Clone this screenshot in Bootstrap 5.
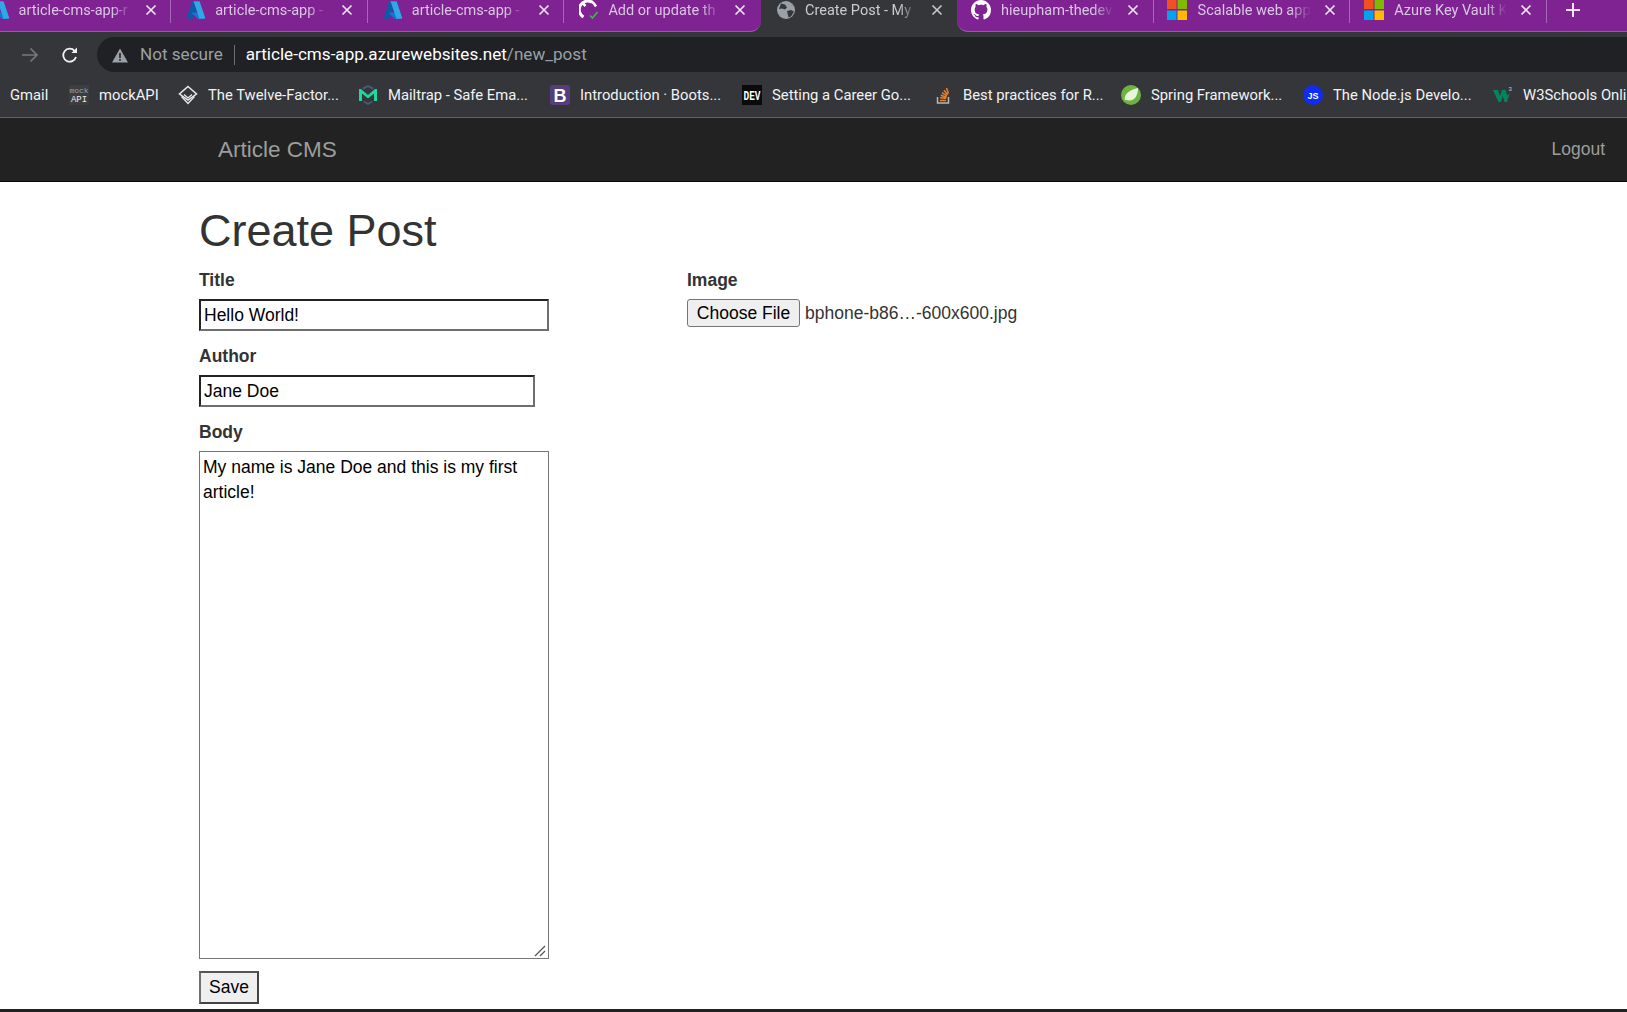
<!DOCTYPE html>
<html lang="en">
<head>
<meta charset="utf-8">
<title>Create Post - My Blog</title>
<link href="https://cdn.jsdelivr.net/npm/bootstrap@5.3.0/dist/css/bootstrap.min.css" rel="stylesheet">
<style>
html,body{height:100%;overflow:hidden}
body{font-family:"Liberation Sans",Arial,sans-serif;font-size:17.5px;color:#333;background:#fff}
.shell{height:100vh}
.tabstrip{height:37px;background:#35363a;font-family:Roboto,sans-serif;font-size:14.5px;flex:none}
.tabgroup{height:32px;background:#7e2391;border-bottom:1px solid #9c57ab;overflow:hidden;flex:none}
.tabgroup-a{width:761px;border-bottom-right-radius:11px}
.tabgroup-b{flex:1 1 auto;border-bottom-left-radius:11px}
.chrome-tab{width:196.6px;height:31px;flex:none;position:relative;padding-left:15px;color:#dac6e2}
.tabgroup-b .chrome-tab{padding-left:13.5px}
.tabgroup-b .tab-txt{margin-left:10.5px}
.tab-first{margin-left:-25.4px}
.tab-sep::after{content:"";position:absolute;right:0;top:0;height:23px;width:1px;background:#a668b4}
.tab-active{width:196px;height:37px;flex:none;position:relative;padding-left:15px;color:#c9cbce}
.tab-row{height:20px}
.tab-ico{width:20px;height:20px;flex:none;display:block}
.tab-txt{width:113px;margin-left:9px;padding-top:1px;white-space:nowrap;overflow:hidden;line-height:20px;-webkit-mask-image:linear-gradient(90deg,#000 82%,transparent 100%);mask-image:linear-gradient(90deg,#000 82%,transparent 100%)}
.tab-x{width:12px;height:12px;margin-left:13px;flex:none;display:block}
.tab-plus{width:16px;height:16px;margin:2px 0 0 18px;flex:none;display:block}
.toolbar{height:35px;background:#35363a;flex:none;padding-left:21px}
.tool-ico{width:18px;height:18px;display:block;flex:none}
.tool-reload{margin-left:22px}
.omnibox{margin-left:18px;flex:1 1 auto;height:35px;background:#202124;border-radius:17.5px 0 0 17.5px;padding-left:15px;padding-top:1px;font-family:Roboto,sans-serif;font-size:17.1px;color:#9aa0a6;white-space:nowrap}
.warn-ico{width:16px;height:15px;flex:none;display:block}
.not-secure{margin-left:12px}
.omni-sep{width:1px;height:20px;background:#6c6e72;margin:0 11px;flex:none}
.url-host{color:#fff}
.bookmarks{height:46px;background:#35363a;border-bottom:1px solid #5f6064;flex:none;padding:2px 0 0 10px;display:grid;grid-template-columns:59px 109px 180px 192px 192px 191px 188px 182px 190px 200px;align-items:center;font-family:Roboto,sans-serif;font-size:14.8px;color:#f1f3f4;overflow:hidden;white-space:nowrap}
.bm-ico{width:20px;height:20px;flex:none;display:block;margin-right:10px;margin-top:-2px}
.site-nav{height:64px;background:#222;border-bottom:1px solid #080808;flex:none;padding:0 22px 0 218px;--bs-navbar-padding-y:0}
.site-brand{font-size:22.5px;color:#9d9d9d;text-decoration:none}
.site-link{font-size:17.5px;color:#9d9d9d;text-decoration:none}
.page-main{flex:1 1 auto;padding-left:199px;min-height:0}
.page-title{font-family:"Liberation Sans",Arial,sans-serif;font-size:45px;font-weight:400;line-height:50px;color:#333;margin:24px 0 11px}
.col-left{width:488px;flex:none}
.field-label{display:block;font-weight:700;font-size:17.5px;line-height:25px;margin:0 0 6px;padding-top:1px;color:#333}
.raw-input{display:block;height:32px;padding:0 3px;font-size:17.5px;color:#000;background:#fff;font-family:"Liberation Sans",Arial,sans-serif;border-style:solid;border-width:2px;border-color:#222 #6f6f6f #6f6f6f #222;border-radius:0;outline:0;margin-bottom:12px}
.input-title{width:350px}
.input-author{width:336px}
.area-wrap{width:350px;margin-bottom:12px}
.raw-area{display:block;width:350px;height:508px;padding:3px 3px 2px;font-size:17.5px;line-height:25px;color:#000;font-family:"Liberation Sans",Arial,sans-serif;border:1px solid #767676;border-radius:0;outline:0;resize:none}
.grip{position:absolute;right:3px;bottom:2px;width:12px;height:12px;display:block;pointer-events:none}
.save-btn{display:block;width:60px;height:33px;padding:0 0 1px;background:#efefef;color:#000;font-size:17.5px;font-family:"Liberation Sans",Arial,sans-serif;border-style:solid;border-width:2px;border-color:#555 #444 #444 #6f6f6f}
.choose-btn{width:113px;height:28px;padding:0;background:#efefef;color:#000;font-size:17.5px;font-family:"Liberation Sans",Arial,sans-serif;border:1px solid #767676;border-radius:3px;flex:none}
.file-name{margin-left:5px;color:#333}
.page-foot{height:3px;background:#222;flex:none}
</style>
</head>
<body>
<svg width="0" height="0" class="position-absolute">
<defs>
<symbol id="i-azure" viewBox="0 0 96 96"><path fill="#0d5aa8" d="M33.34 6.54h26.04l-27.03 80.1a4.15 4.15 0 0 1-3.94 2.81H8.15a4.14 4.14 0 0 1-3.93-5.47L29.4 9.38a4.15 4.15 0 0 1 3.94-2.83z"/><path fill="#0f78d4" d="M71.17 60.26H29.88a1.91 1.91 0 0 0-1.3 3.31l26.53 24.76a4.17 4.17 0 0 0 2.85 1.12h23.38z"/><path fill="#2fa8e8" d="M66.6 9.36a4.14 4.14 0 0 0-3.93-2.82H33.65a4.15 4.15 0 0 1 3.93 2.82l25.18 74.62a4.15 4.15 0 0 1-3.93 5.48h29.02a4.15 4.15 0 0 0 3.93-5.48z"/></symbol>
<symbol id="i-x" viewBox="0 0 12 12"><path d="M1.500 1.500l9 9M10.500 1.500l-9 9" stroke="#f0e6f3" stroke-width="1.700" fill="none"/></symbol>
<symbol id="i-xa" viewBox="0 0 12 12"><path d="M1.500 1.500l9 9M10.500 1.500l-9 9" stroke="#c4c7c5" stroke-width="1.700" fill="none"/></symbol>
<symbol id="i-ms" viewBox="0 0 20 20"><rect x="0" y="-1" width="9.500" height="10" fill="#f25022"/><rect x="10.500" y="-1" width="9.500" height="10" fill="#7fba00"/><rect x="0" y="10.500" width="9.500" height="9.500" fill="#00a4ef"/><rect x="10.500" y="10.500" width="9.500" height="9.500" fill="#ffb900"/></symbol>
</defs>
</svg>
<div class="shell d-flex flex-column">
  <div class="tabstrip d-flex">
    <div class="tabgroup tabgroup-a d-flex">
      <div class="chrome-tab tab-first tab-sep"><div class="tab-row d-flex align-items-center"><svg class="tab-ico"><use href="#i-azure"/></svg><span class="tab-txt">article-cms-app-r</span><svg class="tab-x"><use href="#i-x"/></svg></div></div>
      <div class="chrome-tab tab-sep"><div class="tab-row d-flex align-items-center"><svg class="tab-ico"><use href="#i-azure"/></svg><span class="tab-txt">article-cms-app -</span><svg class="tab-x"><use href="#i-x"/></svg></div></div>
      <div class="chrome-tab tab-sep"><div class="tab-row d-flex align-items-center"><svg class="tab-ico"><use href="#i-azure"/></svg><span class="tab-txt">article-cms-app -</span><svg class="tab-x"><use href="#i-x"/></svg></div></div>
      <div class="chrome-tab"><div class="tab-row d-flex align-items-center"><svg class="tab-ico" viewBox="0 0 20 20"><path d="M13 2.200A8 8 0 1 0 4.500 17" fill="none" stroke="#fff" stroke-width="3"/><path d="M3.500 3l3 3M12 1l3 2.500 2 3" fill="none" stroke="#fff" stroke-width="2.500"/><path d="M11 15.500l2.500 2.500 5-6" fill="none" stroke="#3fb950" stroke-width="1.600"/></svg><span class="tab-txt">Add or update th</span><svg class="tab-x"><use href="#i-x"/></svg></div></div>
    </div>
    <div class="tab-active"><div class="tab-row d-flex align-items-center"><svg class="tab-ico" viewBox="0 0 20 20"><circle cx="10" cy="10" r="9" fill="#9aa0a6"/><path d="M5 3.500l4 1 2 3-2 2-3-1-3 .5zM11 11l4-1 3 1.500-3 5-2.500 1z" fill="#35363a"/></svg><span class="tab-txt">Create Post - My</span><svg class="tab-x"><use href="#i-xa"/></svg></div></div>
    <div class="tabgroup tabgroup-b d-flex">
      <div class="chrome-tab tab-sep"><div class="tab-row d-flex align-items-center"><svg class="tab-ico" viewBox="0 0 16 16"><path fill="#fff" d="M8 0C3.580 0 0 3.580 0 8c0 3.540 2.290 6.530 5.470 7.590.4.07.55-.17.55-.38 0-.19-.01-.82-.01-1.490-2.010.37-2.530-.49-2.690-.94-.09-.23-.48-.94-.82-1.130-.28-.15-.68-.52-.01-.53.63-.01 1.080.58 1.230.82.72 1.210 1.870.87 2.330.66.07-.52.28-.87.51-1.070-1.780-.2-3.640-.89-3.640-3.950 0-.87.31-1.590.82-2.150-.08-.2-.36-1.020.08-2.120 0 0 .67-.21 2.200.82.64-.18 1.320-.27 2-.27.68 0 1.360.09 2 .27 1.530-1.040 2.200-.82 2.200-.82.44 1.100.16 1.920.08 2.120.51.56.82 1.270.82 2.150 0 3.070-1.870 3.750-3.650 3.950.29.25.54.73.54 1.480 0 1.070-.01 1.930-.01 2.200 0 .21.15.46.55.38A8.013 8.013 0 0 0 16 8c0-4.420-3.580-8-8-8z"/></svg><span class="tab-txt">hieupham-thedev</span><svg class="tab-x"><use href="#i-x"/></svg></div></div>
      <div class="chrome-tab tab-sep"><div class="tab-row d-flex align-items-center"><svg class="tab-ico"><use href="#i-ms"/></svg><span class="tab-txt">Scalable web app</span><svg class="tab-x"><use href="#i-x"/></svg></div></div>
      <div class="chrome-tab tab-sep"><div class="tab-row d-flex align-items-center"><svg class="tab-ico"><use href="#i-ms"/></svg><span class="tab-txt">Azure Key Vault K</span><svg class="tab-x"><use href="#i-x"/></svg></div></div>
      <svg class="tab-plus" viewBox="0 0 16 16"><path d="M8 1v14M1 8h14" stroke="#f0e6f3" stroke-width="2" fill="none"/></svg>
    </div>
  </div>
  <div class="toolbar d-flex align-items-center">
    <svg class="tool-ico" viewBox="0 0 18 18"><path d="M1 9h15M9.500 2.500L16 9l-6.500 6.500" fill="none" stroke="#76787b" stroke-width="1.700"/></svg>
    <svg class="tool-ico tool-reload" viewBox="0 0 18 18"><path d="M15 11a6.500 6.500 0 1 1-1.400-6.200" fill="none" stroke="#f1f3f4" stroke-width="1.800"/><path d="M16 1.500V7h-5.500z" fill="#f1f3f4"/></svg>
    <div class="omnibox d-flex align-items-center">
      <svg class="warn-ico" viewBox="0 0 16 15"><path d="M8 .5L16 14.500H0z" fill="#9aa0a6"/><path d="M7.200 5h1.600v5H7.200zM7.200 11h1.600v1.700H7.200z" fill="#202124"/></svg>
      <span class="not-secure">Not secure</span><span class="omni-sep"></span><span><span class="url-host">article-cms-app.azurewebsites.net</span>/new_post</span>
    </div>
  </div>
  <div class="bookmarks">
    <div>Gmail</div>
    <div class="d-flex align-items-center"><svg class="bm-ico" viewBox="0 0 20 20"><rect width="20" height="20" fill="#3c3d40"/><text x="10" y="8" font-family="Liberation Mono" font-size="8" fill="#9aa0a6" text-anchor="middle">mock</text><text x="10" y="17" font-family="Liberation Mono" font-size="9" fill="#e8eaed" text-anchor="middle">API</text></svg><span>mockAPI</span></div>
    <div class="d-flex align-items-center"><svg class="bm-ico" viewBox="0 0 20 20"><path d="M10 1.500L18.500 9 10 15 1.500 9z" fill="none" stroke="#e8eaed" stroke-width="1.500"/><path d="M3.500 11.500L10 18.500l6.500-7M6 9.500l4 3.500 4-3.500" fill="none" stroke="#e8eaed" stroke-width="1.300"/></svg><span>The Twelve-Factor...</span></div>
    <div class="d-flex align-items-center"><svg class="bm-ico" viewBox="0 0 20 20"><path d="M1 16V4l2 0 7 6 7-6 2 0v12h-3V8.500l-6 5-6-5V16z" fill="#1fd6a0"/><path d="M4 3l6-3 6 3-1.500 1.500L10 2 5.500 4.500zM5 17l5 3 5-3-1.500-1L10 18l-3.500-2z" fill="#4a5a78"/></svg><span>Mailtrap - Safe Ema...</span></div>
    <div class="d-flex align-items-center"><svg class="bm-ico" viewBox="0 0 20 20"><rect width="20" height="20" rx="3" fill="#563d7c"/><text x="10" y="16.500" font-family="Liberation Sans" font-size="18" font-weight="700" fill="#fff" text-anchor="middle">B</text></svg><span>Introduction · Boots...</span></div>
    <div class="d-flex align-items-center"><svg class="bm-ico" viewBox="0 0 20 20"><rect width="20" height="20" fill="#0a0a0a"/><text x="10" y="14.500" font-family="Liberation Mono" font-size="13" font-weight="700" fill="#fff" text-anchor="middle" textLength="17" lengthAdjust="spacingAndGlyphs">DEV</text></svg><span>Setting a Career Go...</span></div>
    <div class="d-flex align-items-center"><svg class="bm-ico" viewBox="0 0 20 20"><path d="M4.500 12v6h11v-6" fill="none" stroke="#b5b7ba" stroke-width="1.500"/><path d="M7 15.500h6M7.200 12.800l6 .5M7.800 10.200l5.700 2M9 7.700l5 3.200M11 5.200l3.700 4.600M13.500 3l2 5.500" stroke="#e8822c" stroke-width="1.500" fill="none"/></svg><span>Best practices for R...</span></div>
    <div class="d-flex align-items-center"><svg class="bm-ico" viewBox="0 0 20 20"><circle cx="10" cy="10" r="10" fill="#6db33f"/><path d="M4 15.500c-1.500-5 2.500-10 13-12.500 0 7-3 12.500-8.500 12.500-2 0-3.500-1-4.500 0z" fill="#e8f5dc"/></svg><span>Spring Framework...</span></div>
    <div class="d-flex align-items-center"><svg class="bm-ico" viewBox="0 0 20 20"><circle cx="10" cy="10" r="10" fill="#0f2cf0"/><text x="10" y="13.500" font-family="Liberation Sans" font-size="9" font-weight="700" fill="#fff" text-anchor="middle">JS</text></svg><span>The Node.js Develo...</span></div>
    <div class="d-flex align-items-center"><svg class="bm-ico" viewBox="0 0 20 20"><path d="M0 5h5l2 6 2-6h3.500l2 6L17 7l-3 10h-2.500L9.800 11 8 17H5.500z" fill="#04865a"/><text x="15.500" y="6" font-family="Liberation Sans" font-size="6" fill="#cfd2d5">3</text></svg><span>W3Schools Onli</span></div>
  </div>
  <nav class="navbar site-nav d-flex align-items-center justify-content-between">
    <a class="site-brand" href="#">Article CMS</a>
    <a class="site-link" href="#">Logout</a>
  </nav>
  <main class="page-main">
    <h1 class="page-title">Create Post</h1>
    <form class="d-flex">
      <div class="col-left">
        <label class="field-label" for="t">Title</label>
        <input id="t" class="raw-input input-title" type="text" value="Hello World!">
        <label class="field-label" for="a">Author</label>
        <input id="a" class="raw-input input-author" type="text" value="Jane Doe">
        <label class="field-label" for="b">Body</label>
        <div class="area-wrap position-relative">
          <textarea id="b" class="raw-area">My name is Jane Doe and this is my first article!</textarea>
          <svg class="grip" viewBox="0 0 12 12"><path d="M1 11L11 1M6 11l5-5" stroke="#555" stroke-width="1.300" fill="none"/></svg>
        </div>
        <button type="button" class="save-btn">Save</button>
      </div>
      <div>
        <label class="field-label">Image</label>
        <div class="d-flex align-items-center"><button type="button" class="choose-btn">Choose File</button><span class="file-name">bphone-b86…-600x600.jpg</span></div>
      </div>
    </form>
  </main>
  <div class="page-foot"></div>
</div>
<script src="https://cdn.jsdelivr.net/npm/bootstrap@5.3.0/dist/js/bootstrap.bundle.min.js"></script>
</body>
</html>
